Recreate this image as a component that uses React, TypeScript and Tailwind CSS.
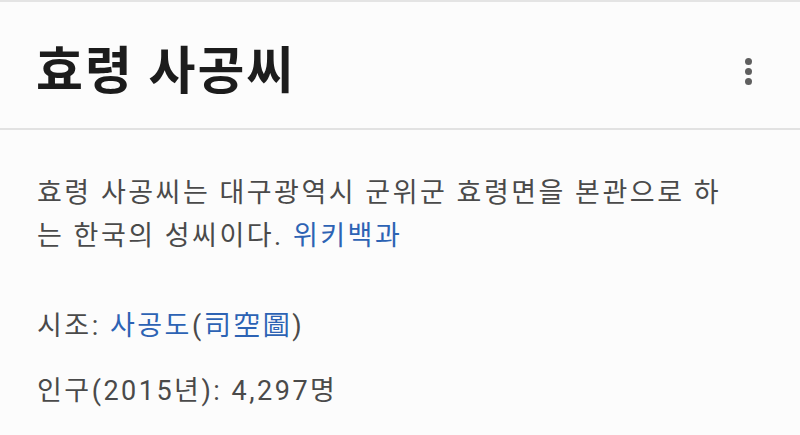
export default function App() {
  const font = { fontFamily: 'Roboto, "Noto Sans CJK KR", sans-serif' };

  return (
    <main
      className="h-[435px] w-[800px] overflow-hidden border-t-2 border-[#e4e4e4] bg-[#fcfcfc]"
      style={font}
    >
      <header className="flex h-[128px] items-center justify-between border-b-2 border-[#e2e2e2] pl-[36px] pr-[44px] pt-[13px]">
        <h1 className="text-[51px] font-bold leading-none tracking-[2px] text-[#1c1c1c]">효령 사공씨</h1>
        <button type="button" className="flex flex-col items-center gap-[3px] p-1">
          <span className="h-[7px] w-[7px] rounded-full bg-[#5f5f5f]" />
          <span className="h-[7px] w-[7px] rounded-full bg-[#5f5f5f]" />
          <span className="h-[7px] w-[7px] rounded-full bg-[#5f5f5f]" />
        </button>
      </header>

      <section className="pl-[37px] pr-[60px] pt-[42px] text-[27px] tracking-[2.5px] text-[#4a4a4a]">
        <p className="leading-[43px]">
          효령 사공씨는 대구광역시 군위군 효령면을 본관으로 하는 한국의 성씨이다.{' '}
          <a href="#" className="text-[#2d63b4]">
            위키백과
          </a>
        </p>

        <p className="mt-[46px] leading-[44px]">
          시조: <a href="#" className="text-[#2d63b4]">사공도</a>
          <span>(</span>
          <a href="#" className="text-[#2d63b4]">司空圖</a>
          <span>)</span>
        </p>

        <p className="mt-[21px] leading-[44px]">인구(2015년): 4,297명</p>
      </section>
    </main>
  );
}
